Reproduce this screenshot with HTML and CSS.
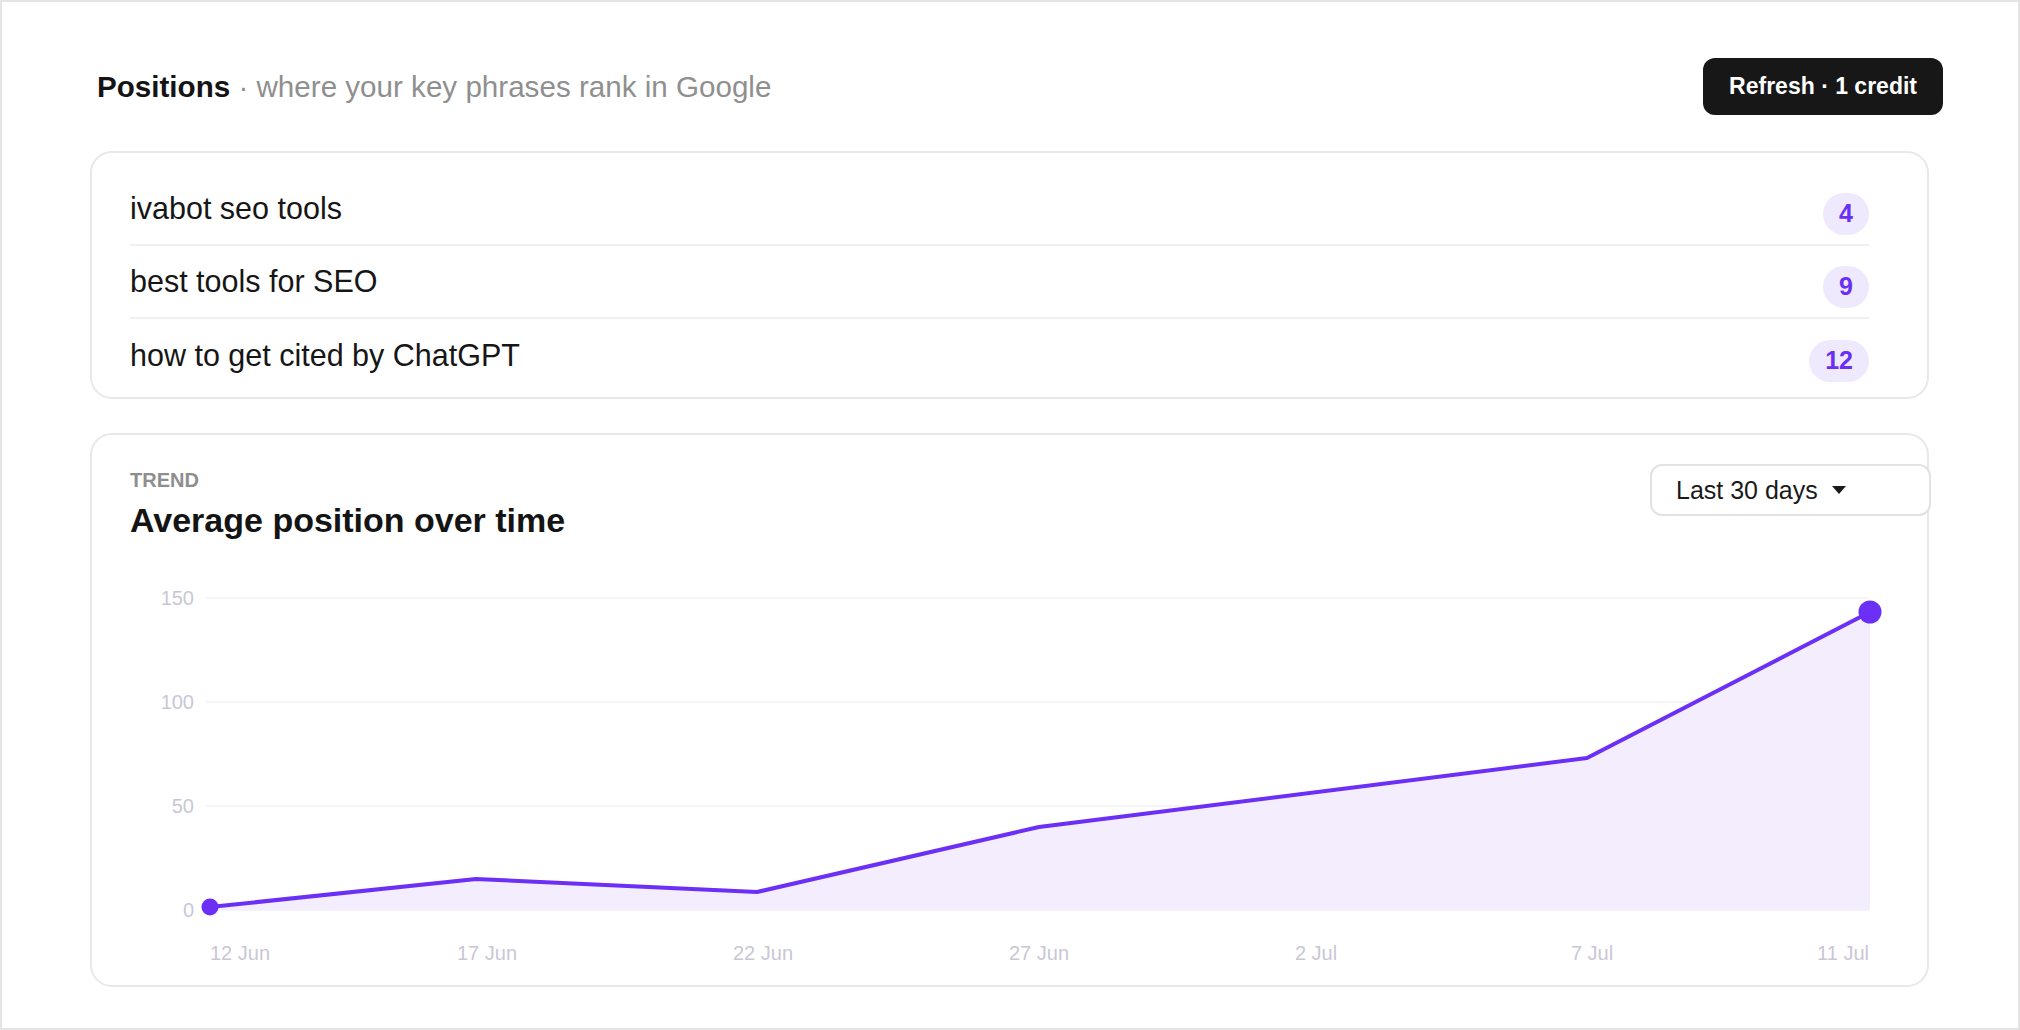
FILE: index.html
```html
<!DOCTYPE html>
<html lang="en">
  <head>
    <meta charset="UTF-8" />
    <meta name="viewport" content="width=device-width, initial-scale=1.0" />
    <title>Positions</title>
    <link rel="stylesheet" href="styles.css">
  </head>

  <body>
    <div class="frame">
      <header class="panel-head">
        <h1 class="panel-title">
          Positions <span class="panel-subtitle">· where your key phrases rank in Google</span>
        </h1>
        <button class="refresh-button">Refresh · 1 credit</button>
      </header>

      <section class="card keyword-card">
        <div class="keyword-row">
          <span class="keyword">ivabot seo tools</span>
          <span class="rank-badge">4</span>
        </div>
        <div class="keyword-row">
          <span class="keyword">best tools for SEO</span>
          <span class="rank-badge">9</span>
        </div>
        <div class="keyword-row">
          <span class="keyword">how to get cited by ChatGPT</span>
          <span class="rank-badge">12</span>
        </div>
      </section>

      <section class="card trend-card">
        <div class="trend-head">
          <div>
            <p class="trend-label">TREND</p>
            <h2 class="trend-title">Average position over time</h2>
          </div>
          <button class="range-select">
            Last 30 days
            <svg class="caret" width="16" height="8" viewBox="0 0 16 8">
              <path d="M1 0 L15 0 L8 8 Z" fill="#1a1a1a" />
            </svg>
          </button>
        </div>

        <svg class="trend-chart" width="1739" height="395" viewBox="0 0 1739 395">
          <!-- grid -->
          <g class="grid">
            <line x1="76" y1="18" x2="1739" y2="18" />
            <line x1="76" y1="122" x2="1739" y2="122" />
            <line x1="76" y1="226" x2="1739" y2="226" />
            <line x1="76" y1="330" x2="1739" y2="330" />
          </g>
          <g class="axis-label" text-anchor="end">
            <text x="64" y="25">150</text>
            <text x="64" y="129">100</text>
            <text x="64" y="233">50</text>
            <text x="64" y="337">0</text>
          </g>

          <polygon
            class="area"
            points="80,327 346,299 627,312 909,247 1457,178 1740,32 1740,330 80,330"
          />
          <polyline
            class="line"
            points="80,327 346,299 627,312 909,247 1457,178 1740,32"
          />
          <circle class="dot" cx="80" cy="327" r="8.5" />
          <circle class="dot" cx="1740" cy="32" r="11.5" />

          <g class="axis-label">
            <text x="80" y="380">12 Jun</text>
            <text x="357" y="380" text-anchor="middle">17 Jun</text>
            <text x="633" y="380" text-anchor="middle">22 Jun</text>
            <text x="909" y="380" text-anchor="middle">27 Jun</text>
            <text x="1186" y="380" text-anchor="middle">2 Jul</text>
            <text x="1462" y="380" text-anchor="middle">7 Jul</text>
            <text x="1739" y="380" text-anchor="end">11 Jul</text>
          </g>
        </svg>
      </section>
    </div>
  </body>
</html>
```

FILE: styles.css
```css
body {
  margin: 0;
  font-family: "Liberation Sans", Arial, sans-serif;
  color: #161616;
  background-color: white;
}

.frame {
  box-sizing: border-box;
  width: 2020px;
  height: 1030px;
  padding: 56px 89px 0 88px;
  border: 2px solid #e4e4e4;
}

.panel-head {
  display: flex;
  justify-content: space-between;
  align-items: center;
  margin-bottom: 36px;
}

.panel-title {
  margin: 0 0 0 7px;
  font-size: 29.6px;
  font-weight: bold;
  color: #141414;
}

.panel-subtitle {
  font-weight: normal;
  color: #8f8f8f;
}

.refresh-button {
  height: 57px;
  margin-right: -14px;
  padding: 0 26px;
  font-family: inherit;
  font-size: 23px;
  font-weight: bold;
  color: white;
  background-color: #171717;
  border: none;
  border-radius: 12px;
}

.card {
  border: 2px solid #e8e8e8;
  border-radius: 22px;
  background-color: white;
}

.keyword-card {
  padding: 20px 58px 5px 38px;
}

.keyword-row {
  box-sizing: border-box;
  display: flex;
  justify-content: space-between;
  align-items: center;
  height: 73px;
  border-bottom: 2px solid #f0f0f0;
}

.keyword-row:last-child {
  border-bottom: none;
}

.keyword {
  font-size: 30.5px;
  color: #161616;
}

.rank-badge {
  display: flex;
  align-items: center;
  height: 42px;
  margin-top: 10px;
  padding: 0 16px;
  font-size: 25px;
  font-weight: bold;
  color: #6a2ff5;
  background-color: #efe9fd;
  border-radius: 21px;
}

.trend-card {
  margin-top: 34px;
  padding: 29px 58px 10px 38px;
}

.trend-head {
  display: flex;
  justify-content: space-between;
  align-items: flex-start;
}

.trend-label {
  margin: 0;
  font-size: 20px;
  line-height: 32px;
  font-weight: bold;
  color: #8e8e8e;
}

.trend-title {
  margin: 0;
  font-size: 34px;
  line-height: 48px;
  font-weight: bold;
  color: #141414;
}

.range-select {
  display: flex;
  align-items: center;
  gap: 13px;
  width: 281px;
  height: 52px;
  margin-right: -62px;
  padding: 0 0 0 24px;
  font-family: inherit;
  font-size: 25px;
  color: #1a1a1a;
  background-color: white;
  border: 2px solid #e2e2e2;
  border-radius: 12px;
}

.trend-chart {
  display: block;
  margin-top: 36px;
  overflow: visible;
}

.grid line {
  stroke: #f1f1f4;
  stroke-width: 1.5;
}

.axis-label {
  font-family: "Liberation Sans", Arial, sans-serif;
  font-size: 20px;
  fill: #c9c7d6;
}

.area {
  fill: #f3edfe;
}

.line {
  fill: none;
  stroke: #6b2ff5;
  stroke-width: 4;
  stroke-linejoin: round;
}

.dot {
  fill: #6b2ff5;
}
```
